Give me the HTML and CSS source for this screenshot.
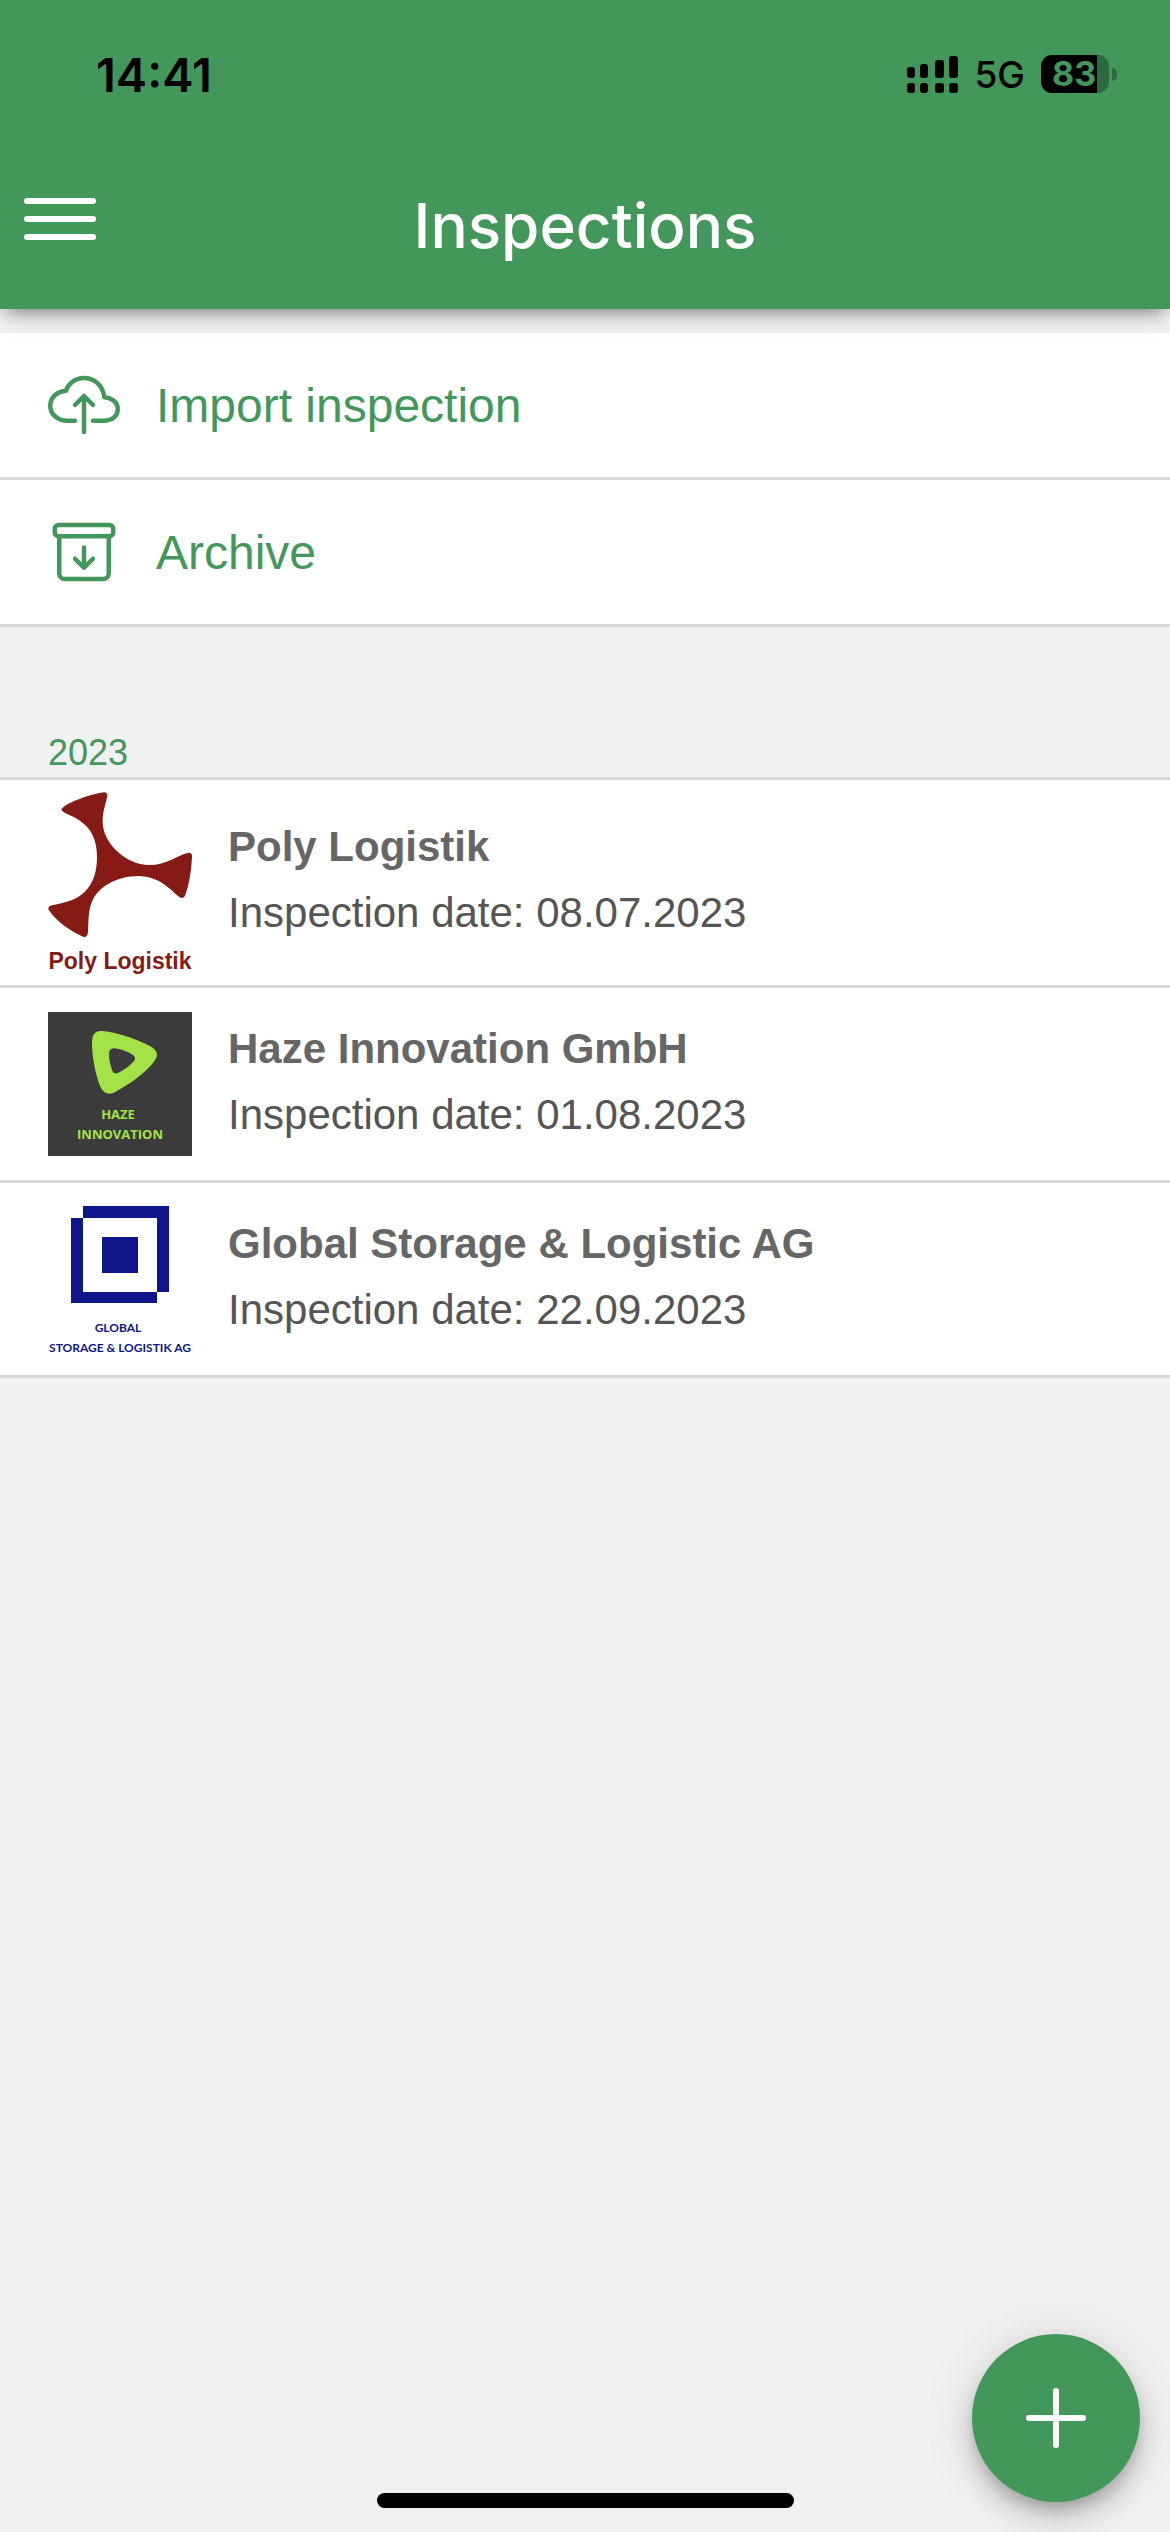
FILE: index.html
```html
<!DOCTYPE html>
<html lang="en">
<head>
<meta charset="utf-8">
<meta name="viewport" content="width=device-width, initial-scale=1">
<title>Inspections</title>
<link rel="stylesheet" href="styles.css">
</head>
<body>
<header class="header">
  <div class="status">
    <span class="status-time">14:41</span>
    <div class="status-right">
      <svg class="signal" viewBox="0 0 51 38" aria-hidden="true">
        <rect x="0" y="12" width="8" height="11" rx="3"/><rect x="13" y="9" width="8" height="14" rx="3"/><rect x="28" y="5" width="9" height="18" rx="3"/><rect x="42" y="1" width="9" height="22" rx="3"/>
        <rect x="0" y="28" width="8" height="10" rx="3"/><rect x="13" y="28" width="8" height="10" rx="3"/><rect x="28" y="28" width="9" height="10" rx="3"/><rect x="42" y="28" width="9" height="10" rx="3"/>
      </svg>
      <span class="network">5G</span>
      <div class="battery">
        <span class="battery-level">83</span>
        <span class="battery-tip"></span>
      </div>
    </div>
  </div>
  <div class="toolbar">
    <button class="menu-button" type="button" aria-label="Menu">
      <svg class="icon" viewBox="0 0 72 72" aria-hidden="true"><path d="M3 18h66M3 36h66M3 54h66" fill="none" stroke="currentColor" stroke-width="6" stroke-linecap="round"/></svg>
    </button>
    <h1 class="title">Inspections</h1>
  </div>
</header>

<main>
  <ul class="list actions">
    <li><a class="row action" href="#import">
      <svg class="icon line-icon" viewBox="0 0 512 512" aria-hidden="true"><path d="M320 367.79h76c55 0 100-29.21 100-83.6s-53-81.47-96-83.6c-8.89-85.06-71-136.8-144-136.8-69 0-113.44 45.79-128 91.2-60 5.7-112 43.88-112 106.4s54 106.4 120 106.4h56"/><path d="M320 255.79l-64-64-64 64M256 448.21V207.79"/></svg>
      Import inspection</a></li>
    <li><a class="row action" href="#archive">
      <svg class="icon line-icon" viewBox="0 0 512 512" aria-hidden="true"><path d="M80 152v256a40.12 40.12 0 0040 40h272a40.12 40.12 0 0040-40V152"/><rect x="48" y="64" width="416" height="80" rx="28" ry="28"/><path d="M320 304l-64 64-64-64M256 345.89V224"/></svg>
      Archive</a></li>
  </ul>

  <h2 class="year">2023</h2>
  <ul class="list">
    <li><a class="row inspection compact" href="#poly">
      <svg class="logo logo-tall" viewBox="0 0 144 181" role="img" aria-label="Poly Logistik">
        <path transform="scale(.3333) translate(-144 -515)" fill="#861b16" d="M184 568C188 555 240 530 303 517Q323 512 322 527C318 550 308 570 308 605C308 670 380 734 447 734C500 734 535 703 566 697Q578 697 576 712C574 750 568 790 556 825Q550 838 537 829C515 812 480 767 415 767C350 767 295 800 278 840C264 868 266 900 264 935Q262 955 246 948C210 930 170 905 146 868Q142 858 156 855C200 846 230 839 256 813C282 785 291 750 291 710C291 660 275 625 240 601C215 583 190 580 184 568Z"/>
        <text class="poly-name" x="72" y="177">Poly Logistik</text>
      </svg>
      <span class="details"><strong class="name">Poly Logistik</strong><span class="date">Inspection date: 08.07.2023</span></span>
    </a></li>
    <li><a class="row inspection" href="#haze">
      <svg class="logo" viewBox="0 0 144 144" role="img" aria-label="Haze Innovation">
        <rect width="144" height="144" fill="#3b3b3b"/>
        <path transform="scale(.3333) translate(-144 -96)" fill="#a3e348" fill-rule="evenodd" d="M276 182Q277 152 305 153C345 156 400 173 450 198Q482 216 465 241C440 277 390 313 340 339Q315 348 302 322C288 290 275 230 276 182ZM327 220Q328 204 345 205C365 208 380 214 398 224Q410 232 402 243C390 258 372 270 354 279Q342 284 337 272C331 255 327 240 327 220Z"/>
        <text class="haze-name" x="70" y="107">HAZE</text>
        <text class="haze-name" x="72" y="127">INNOVATION</text>
      </svg>
      <span class="details"><strong class="name">Haze Innovation GmbH</strong><span class="date">Inspection date: 01.08.2023</span></span>
    </a></li>
    <li><a class="row inspection" href="#global">
      <svg class="logo" viewBox="0 0 144 144" role="img" aria-label="Global Storage &amp; Logistik AG">
        <path fill="#0e168b" d="M35 -1h86v86h-12V11H35zM23 11h12v74h74v11H23zM54 30h36v36H54z"/>
        <text class="global-name" x="70" y="125">GLOBAL</text>
        <text class="global-name" x="72" y="145">STORAGE &amp; LOGISTIK AG</text>
      </svg>
      <span class="details"><strong class="name">Global Storage &amp; Logistic AG</strong><span class="date">Inspection date: 22.09.2023</span></span>
    </a></li>
  </ul>
</main>

<button class="fab" type="button" aria-label="Add inspection">
  <svg viewBox="0 0 60 60" aria-hidden="true"><path d="M30 3v54M3 30h54" stroke="currentColor" stroke-width="6" stroke-linecap="round"/></svg>
</button>
<div class="home-indicator"></div>
</body>
</html>
```
FILE: styles.css
```css
:root {
  --green: #43975b;
  --line: #d9d9d9;
  --page: #f1f1f1;
}

* { box-sizing: border-box; }

body {
  margin: 0;
  min-height: 100vh;
  background: var(--page);
  color: #555;
  font-family: "Liberation Sans", Arial, sans-serif;
}

.header {
  position: relative;
  z-index: 1;
  background: var(--green);
  box-shadow: 0 9px 18px -6px rgba(0, 0, 0, .5);
}

.status {
  display: flex;
  align-items: center;
  justify-content: space-between;
  padding: 46px 53px 39px 96px;
  height: 141px;
  color: #000;
  font-family: Inter, sans-serif;
}

.status-time { font-size: 47px; font-weight: 600; }

.status-right { display: flex; align-items: center; gap: 16px; }

.signal { width: 51px; height: 38px; }

.network { font-size: 37px; font-weight: 500; }

.battery { display: flex; align-items: center; gap: 3px; }

.battery-level {
  width: 68px;
  padding-left: 11px;
  border-radius: 11px;
  background: linear-gradient(to right, #000 56px, #2e6a40 56px);
  color: var(--green);
  font-size: 34px;
  font-weight: 700;
  line-height: 38px;
}

.battery-tip {
  width: 5px;
  height: 13px;
  border-radius: 0 5px 5px 0;
  background: #2e6a40;
}

.toolbar {
  display: grid;
  grid-template-columns: 1fr auto 1fr;
  align-items: center;
  height: 168px;
  padding: 0 24px;
  color: #fff;
}

.menu-button {
  justify-self: start;
  padding: 0 0 12px;
  border: 0;
  background: none;
  color: inherit;
}

.icon { display: block; flex: none; width: 72px; height: 72px; }

.title {
  margin: 0;
  font-family: Inter, sans-serif;
  font-size: 62px;
  font-weight: 500;
}

.list { margin: 0; padding: 0; list-style: none; }

.actions { padding-top: 24px; }

.row {
  display: flex;
  align-items: center;
  gap: 36px;
  padding: 24px 48px;
  border-bottom: 3px solid var(--line);
  background: #fff;
  color: inherit;
  text-decoration: none;
}

.action {
  padding: 36px 48px;
  color: var(--green);
  font-size: 48px;
}

.line-icon {
  fill: none;
  stroke: currentColor;
  stroke-width: 32;
  stroke-linecap: round;
  stroke-linejoin: round;
}

.year {
  margin: 0;
  padding: 105px 48px 3px;
  border-bottom: 3px solid var(--line);
  color: var(--green);
  font-size: 36px;
  font-weight: 400;
  line-height: 42px;
}

.compact { padding: 12px 48px; }

.logo { flex: none; width: 144px; height: 144px; overflow: visible; }
.logo-tall { height: 181px; }

.logo text { font-weight: 700; text-anchor: middle; }
.poly-name { fill: #861b16; font-size: 23px; }
.haze-name { fill: #a3e348; font-family: "Open Sans", sans-serif; font-size: 13px; }
.global-name { fill: #0e168b; font-family: Lato, sans-serif; font-size: 12px; }

.details {
  display: flex;
  flex-direction: column;
  padding-bottom: 5px;
  font-size: 42px;
  line-height: 66px;
}

.name { color: #666; }

.fab {
  position: fixed;
  right: 30px;
  bottom: 30px;
  display: grid;
  place-items: center;
  width: 168px;
  height: 168px;
  padding: 0;
  border: 0;
  border-radius: 50%;
  background: var(--green);
  box-shadow: 0 9px 15px -3px rgba(0, 0, 0, .2), 0 18px 30px rgba(0, 0, 0, .14), 0 3px 54px rgba(0, 0, 0, .12);
  color: #fff;
}

.fab svg { width: 60px; height: 60px; }

.home-indicator {
  position: fixed;
  bottom: 24px;
  left: 50%;
  width: 417px;
  height: 15px;
  margin-left: -208px;
  border-radius: 8px;
  background: #000;
}
```
